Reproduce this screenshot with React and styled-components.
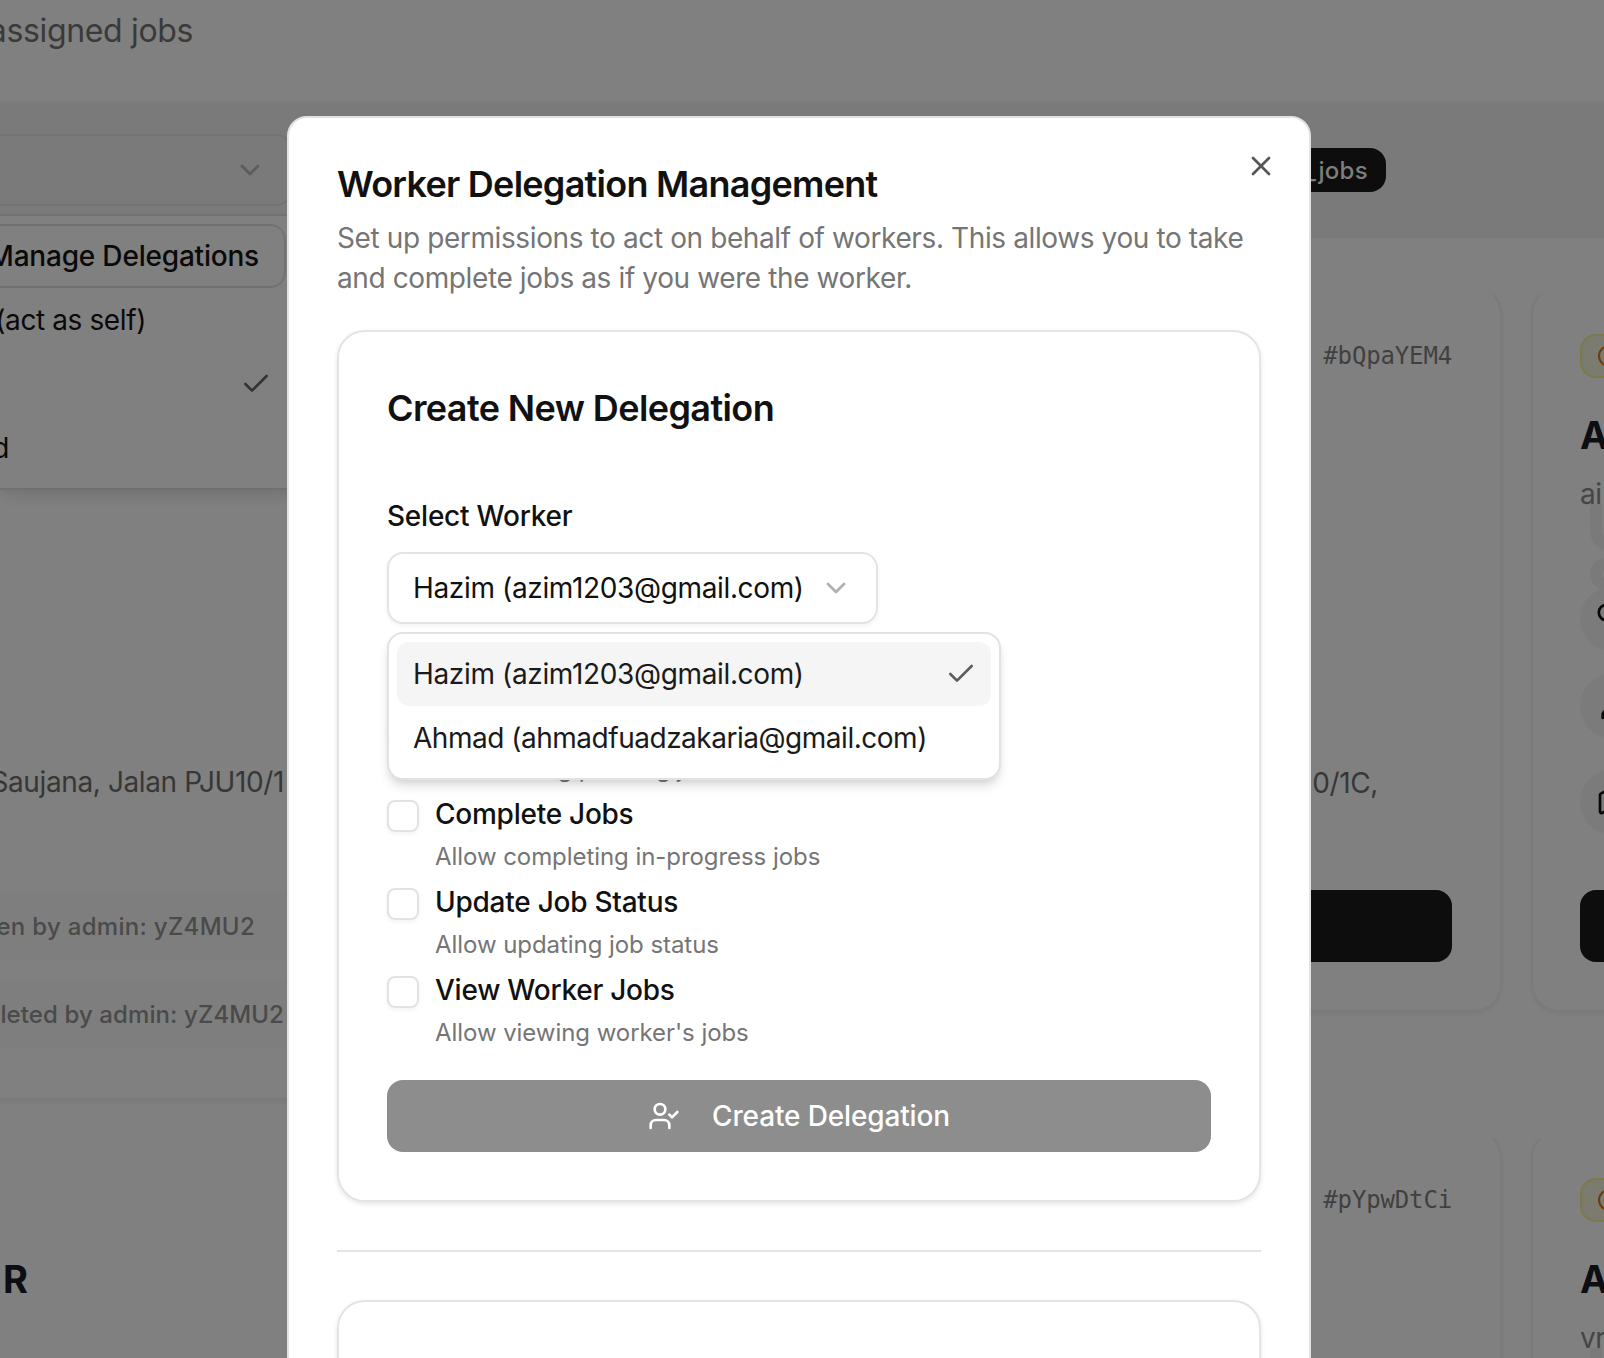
import React from "react";
import styled, { createGlobalStyle, css } from "styled-components";
import { Check, ChevronDown, Clock, Map, User, UserCheck, X } from "lucide-react";

const Global = createGlobalStyle`
  *, *::before, *::after { box-sizing: border-box; }
  body { margin: 0; background: #808080; overflow: hidden; font-family: Inter, "Liberation Sans", sans-serif; color: #111; }
  p, h1, h2, h3 { margin: 0; }
`;

const ui = css`
  letter-spacing: -0.39px;
  font-size: 28px;
  line-height: 40px;
  white-space: nowrap;
`;

/* ---------- page behind the dialog ---------- */
const Page = styled.div`
  position: relative;
  width: 1604px;
  height: 1358px;
  overflow: hidden;
`;

const Backdrop = styled.div`
  display: flex;
  flex-direction: column;
  height: 1358px;
  background: #808080;
`;

const Intro = styled.header`
  height: 101px;
  flex: none;
  padding-top: 7px;
  width: 193px;
  display: flex;
  justify-content: flex-end;
  font-size: 32px;
  line-height: 48px;
  letter-spacing: -0.35px;
  color: #3a3a3a;
  white-space: nowrap;
`;

const FilterBar = styled.section`
  height: 137px;
  flex: none;
  display: flex;
  justify-content: space-between;
  align-items: flex-start;
  padding: 32px 218px 0 0;
  background: #7a7a7a;
  border-top: 1px solid #7e7e7e;
`;

const FilterSelect = styled.div`
  width: 292px;
  height: 72px;
  border: 2px solid #727272;
  border-left: 0;
  border-radius: 0 16px 16px 0;
  display: flex;
  align-items: center;
  justify-content: flex-end;
  padding-right: 24px;
  color: #5c5c5c;
`;

const ScopeBadge = styled.span`
  margin-top: 14px;
  height: 44px;
  width: 160px;
  padding: 1px 18px 0;
  border-radius: 16px;
  background: #0d0d0d;
  color: #7d7d7d;
  font-size: 24px;
  font-weight: 500;
  letter-spacing: 0.3px;
  line-height: 44px;
  text-align: right;
`;

const ActingMenu = styled.div`
  position: absolute;
  left: 0;
  top: 214px;
  width: 296px;
  height: 276px;
  padding: 8px 8px 8px 0;
  background: #808080;
  border: 2px solid #717171;
  border-left: 0;
  box-shadow: 0 8px 12px -2px rgba(0, 0, 0, 0.1);
`;

const ManageButton = styled.div`
  ${ui}
  width: 286px;
  height: 64px;
  display: flex;
  align-items: center;
  justify-content: flex-end;
  padding-right: 25px;
  border: 2px solid #727272;
  border-left: 0;
  border-radius: 0 16px 16px 0;
  font-weight: 500;
  letter-spacing: -0.2px;
  color: #0a0a0a;
`;

const MenuRow = styled.div`
  ${ui}
  height: 64px;
  width: ${(p) => p.$end}px;
  display: flex;
  align-items: center;
  justify-content: flex-end;
  color: #0a0a0a;
`;

const Grid = styled.main`
  flex: 1;
  display: grid;
  grid-template-columns: 438px 1093px 73px;
  align-items: start;
  padding-top: 48px;
`;

const Column = styled.div`
  display: flex;
  flex-direction: column;
`;

const cardBox = css`
  border: 2px solid #7a7a7a;
  border-top-color: #808080;
  border-radius: 28px;
  box-shadow: 0 2px 4px rgba(0, 0, 0, 0.06);
`;

const LeftCard = styled.article`
  ${cardBox}
  border-left: 0;
  border-radius: 0;
  height: ${(p) => p.$h}px;
  margin-bottom: 31px;
  padding-top: ${(p) => p.$pt}px;
`;

const Address = styled.p`
  ${ui}
  width: 284px;
  display: flex;
  justify-content: flex-end;
  color: #373737;
`;

const AuditRow = styled.div`
  margin-top: ${(p) => p.$mt}px;
  width: 420px;
  height: 68px;
  padding-right: ${(p) => 420 - p.$end}px;
  display: flex;
  align-items: center;
  justify-content: flex-end;
  background: #7e7e7e;
  color: #4a4a4a;
  font-size: 24px;
  font-weight: 500;
  letter-spacing: ${(p) => p.$ls}px;
  white-space: nowrap;
`;

const JobTitle = styled.h3`
  font-size: 38px;
  line-height: 48px;
  font-weight: 700;
  color: #0c0e13;
  width: ${(p) => p.$w || "auto"};
  text-align: ${(p) => (p.$w ? "right" : "left")};
`;

const MidCard = styled.article`
  ${cardBox}
  height: 726px;
  margin-bottom: 118px;
  width: 1064px;
  padding: 51px 48px 0 0;
  display: flex;
  flex-direction: column;
  align-items: flex-end;
`;

const JobId = styled.div`
  font-family: "DejaVu Sans Mono", "Liberation Mono", monospace;
  font-size: 24px;
  line-height: 34px;
  letter-spacing: -0.15px;
  color: #404040;
`;

const MidAddress = styled.p`
  ${ui}
  margin: 390px 74px 0 0;
  color: #373737;
`;

const TakeButton = styled.div`
  flex: none;
  margin-top: ${(p) => p.$mt}px;
  width: ${(p) => p.$w}px;
  height: 72px;
  border-radius: 16px;
  background: #0d0d0d;
`;

const SideCard = styled.article`
  ${cardBox}
  height: 726px;
  width: 480px;
  margin-bottom: 118px;
  padding: 46px 0 0 47px;
  display: flex;
  flex-direction: column;
  align-items: flex-start;
`;

const StatusBadge = styled.div`
  width: 140px;
  height: 44px;
  padding-left: 15px;
  display: flex;
  align-items: center;
  border: 2px solid #7c7948;
  border-radius: 16px;
  background: #7c7b6f;
  color: #6b3d0a;
`;

const SideTitle = styled(JobTitle)`
  margin-top: 33px;
`;

const SideNote = styled.p`
  ${ui}
  margin-top: 15px;
  color: #454545;
`;

const Ghost = styled.svg`
  margin: 0 0 0 8px;
  display: block;
  overflow: visible;
`;

const IconDisc = styled.div`
  width: 64px;
  height: 64px;
  margin-top: ${(p) => p.$mt}px;
  border-radius: 50%;
  display: flex;
  align-items: center;
  justify-content: center;
  background: #7b7b7b;
  color: #080808;
`;

/* ---------- dialog ---------- */
const Dialog = styled.section`
  position: absolute;
  left: 287px;
  top: 116px;
  width: 1024px;
  height: 1400px;
  padding: 48px;
  border: 2px solid #e2e2e2;
  border-radius: 20px;
  background: #fff;
`;

const CloseButton = styled.button`
  position: absolute;
  right: 32px;
  top: 32px;
  width: 32px;
  height: 32px;
  padding: 0;
  border: 0;
  background: none;
  color: #555;
  display: grid;
  place-items: center;
`;

const Title = styled.h2`
  font-size: 36px;
  line-height: 36px;
  font-weight: 600;
  letter-spacing: ${(p) => p.$ls}px;
  color: #111;
  white-space: nowrap;
`;

const Lead = styled.p`
  ${ui}
  margin-top: 16px;
  color: #757575;
`;

const Card = styled.section`
  margin-top: ${(p) => p.$mt}px;
  height: ${(p) => p.$h}px;
  padding: 58px 48px 0;
  border: 2px solid #e4e4e4;
  border-radius: 28px;
  background: #fff;
  box-shadow: 0 2px 5px rgba(0, 0, 0, 0.1);
`;

const FieldLabel = styled.div`
  ${ui}
  margin-top: 70px;
  font-weight: 500;
  letter-spacing: -0.23px;
`;

const Picker = styled.div`
  position: relative;
  margin-top: 16px;
  display: flex;
`;

const Trigger = styled.button`
  ${ui}
  width: 491px;
  height: 72px;
  padding: 0 24px;
  display: flex;
  align-items: center;
  justify-content: space-between;
  border: 2px solid #e4e4e4;
  border-radius: 16px;
  background: #fff;
  color: #111;
  font-family: inherit;
  letter-spacing: -0.35px;
  box-shadow: 0 2px 4px rgba(0, 0, 0, 0.05);
  svg { color: #b0b0b0; }
`;

const Options = styled.div`
  position: absolute;
  left: 0;
  top: 80px;
  width: 614px;
  height: 148px;
  padding: 8px;
  border: 2px solid #e2e2e2;
  border-radius: 16px;
  background: #fff;
  box-shadow: 0 8px 12px -2px rgba(0, 0, 0, 0.12), 0 4px 8px -4px rgba(0, 0, 0, 0.12);
`;

const Option = styled.div`
  ${ui}
  height: 64px;
  padding: 0 14px 0 16px;
  display: flex;
  align-items: center;
  justify-content: space-between;
  letter-spacing: ${(p) => p.$ls}px;
  border-radius: 12px;
  background: ${(p) => (p.$active ? "#f5f5f5" : "transparent")};
  color: #1a1a1a;
  svg { color: #5d5d5d; }
`;

const Permissions = styled.div`
  margin-top: 88px;
  display: flex;
  flex-direction: column;
`;

const Permission = styled.div`
  height: 88px;
  display: flex;
  gap: 16px;
`;

const Box = styled.span`
  flex: none;
  width: 32px;
  height: 32px;
  border: 2px solid #e2e2e2;
  border-radius: 8px;
  box-shadow: 0 2px 4px rgba(0, 0, 0, 0.05);
`;

const PermissionName = styled.div`
  font-size: 28px;
  line-height: 28px;
  font-weight: 500;
  letter-spacing: -0.25px;
`;

const PermissionHint = styled.div`
  margin-top: 13px;
  font-size: 24px;
  line-height: 32px;
  letter-spacing: -0.06px;
  color: #757575;
`;

const Submit = styled.button`
  ${ui}
  margin-top: 16px;
  width: 100%;
  height: 72px;
  padding: 0;
  display: flex;
  align-items: center;
  justify-content: center;
  gap: 32px;
  border: 0;
  border-radius: 16px;
  background: #8d8d8d;
  color: #fff;
  font-family: inherit;
  font-weight: 500;
  letter-spacing: -0.15px;
`;

const Rule = styled.hr`
  margin: 48px 0 0;
  border: 0;
  height: 2px;
  background: #e4e4e4;
`;

const permissions = [
  ["Take Jobs", "Allow taking pending jobs"],
  ["Complete Jobs", "Allow completing in-progress jobs"],
  ["Update Job Status", "Allow updating job status"],
  ["View Worker Jobs", "Allow viewing worker's jobs"],
];

function SideJob({ note }) {
  return (
    <SideCard>
      <StatusBadge><Clock size={24} /></StatusBadge>
      <SideTitle>A</SideTitle>
      <SideNote>{note}</SideNote>
      <Ghost width="60" height="77" viewBox="0 0 60 77" fill="none" stroke="#7a7a7a" strokeWidth="12">
        <path d="M8 -10V16Q8 28 20 31" />
        <circle cx="18" cy="60" r="10" />
      </Ghost>
      <IconDisc $mt={-4}>
        <svg width="32" height="32" viewBox="0 0 32 32" fill="none" stroke="currentColor" strokeWidth="2.7">
          <circle cx="10.5" cy="9.5" r="7.7" />
        </svg>
      </IconDisc>
      <IconDisc $mt={23}><User size={32} /></IconDisc>
      <IconDisc $mt={32}><Map size={32} /></IconDisc>
      <TakeButton $w={380} $mt={56} />
    </SideCard>
  );
}

export default function App() {
  return (
    <>
      <Global />
      <Page>
        <Backdrop>
          <Intro>assigned jobs</Intro>
          <FilterBar>
            <FilterSelect><ChevronDown size={32} /></FilterSelect>
            <ScopeBadge>view_jobs</ScopeBadge>
          </FilterBar>
          <Grid>
            <Column>
              <LeftCard $h={814} $pt={474}>
                <Address>Saujana, Jalan PJU10/1</Address>
                <AuditRow $mt={90} $end={255} $ls={0.3}>ken by admin: yZ4MU2</AuditRow>
                <AuditRow $mt={20} $end={284} $ls={0.1}>pleted by admin: yZ4MU2</AuditRow>
              </LeftCard>
              <LeftCard $h={724} $pt={122}>
                <JobTitle $w="28px">R</JobTitle>
              </LeftCard>
            </Column>
            <Column>
              <MidCard>
                <JobId>#bQpaYEM4</JobId>
                <MidAddress>0/1C,</MidAddress>
                <TakeButton $w={400} $mt={87} />
              </MidCard>
              <MidCard><JobId>#pYpwDtCi</JobId></MidCard>
            </Column>
            <Column>
              <SideJob note="ai" />
              <SideJob note="vr" />
            </Column>
          </Grid>
        </Backdrop>

        <ActingMenu>
          <ManageButton>Manage Delegations</ManageButton>
          <MenuRow $end={146}>(act as self)</MenuRow>
          <MenuRow $end={272}><Check size={32} color="#333" /></MenuRow>
          <MenuRow $end={9}>d</MenuRow>
        </ActingMenu>

        <Dialog>
          <CloseButton aria-label="Close"><X size={32} /></CloseButton>
          <Title $ls={-0.74}>Worker Delegation Management</Title>
          <Lead>
            Set up permissions to act on behalf of workers. This allows you to take
            <br />
            and complete jobs as if you were the worker.
          </Lead>
          <Card $h={872} $mt={32}>
            <Title as="h3" $ls={-0.6}>Create New Delegation</Title>
            <FieldLabel>Select Worker</FieldLabel>
            <Picker>
              <Trigger>Hazim (azim1203@gmail.com)<ChevronDown size={32} /></Trigger>
              <Options>
                <Option $active $ls={-0.35}>Hazim (azim1203@gmail.com)<Check size={32} /></Option>
                <Option $ls={-0.48}>Ahmad (ahmadfuadzakaria@gmail.com)</Option>
              </Options>
            </Picker>
            <Permissions>
              {permissions.map(([name, hint]) => (
                <Permission key={name}>
                  <Box />
                  <div>
                    <PermissionName>{name}</PermissionName>
                    <PermissionHint>{hint}</PermissionHint>
                  </div>
                </Permission>
              ))}
            </Permissions>
            <Submit><UserCheck size={32} />Create Delegation</Submit>
          </Card>
          <Rule />
          <Card $h={400} $mt={48} />
        </Dialog>
      </Page>
    </>
  );
}
